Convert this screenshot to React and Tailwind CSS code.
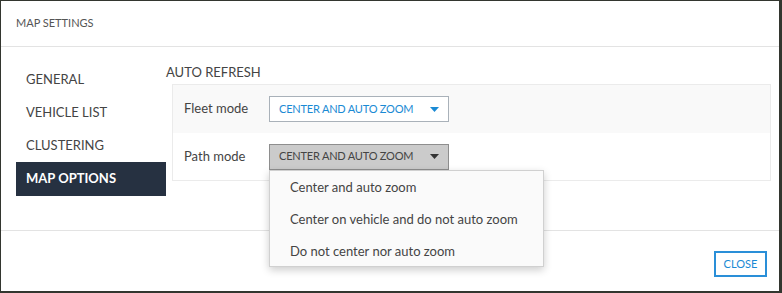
import React from 'react';

const caret = (color) => (
  <svg width="9" height="5" viewBox="0 0 9 5" className="shrink-0">
    <path d="M0 0h9L4.5 5z" fill={color} />
  </svg>
);

export default function App() {
  const sections = ['GENERAL', 'VEHICLE LIST', 'CLUSTERING', 'MAP OPTIONS'];
  const options = ['Center and auto zoom', 'Center on vehicle and do not auto zoom', 'Do not center nor auto zoom'];

  return (
    <div className="w-[782px] h-[293px] bg-[#33362f] pl-px pt-px font-['Lato','Open_Sans',sans-serif]">
      <div className="relative w-[778px] h-[290px] bg-white flex flex-col">
        <div className="h-[45px] box-content flex items-center pl-[15px] text-[11px] text-[#555] border-b border-[#e3e3e3]">
          MAP SETTINGS
        </div>

        <div className="flex h-[184px] border-b border-[#e3e3e3]">
          <div className="w-[150px] ml-[15px] pt-[16px]">
            {sections.map(s => (
              <div
                key={s}
                className={
                  s === 'MAP OPTIONS'
                    ? 'h-[34px] flex items-center pl-[10px] text-[13px] font-bold text-white bg-[#263141]'
                    : 'h-[33px] flex items-center pl-[10px] text-[13px] text-[#444]'
                }
              >
                {s}
              </div>
            ))}
          </div>

          <div className="flex-1 pt-[17px] pr-[8px]">
            <div className="text-[13px] text-[#444] leading-[17px] h-[20px]">AUTO REFRESH</div>
            <div className="ml-[6px] border border-[#ebebeb]">
              <div className="h-[48px] flex items-center bg-[#f9f9f9] pl-[11px]">
                <div className="w-[85px] text-[13px] text-[#444]">Fleet mode</div>
                <div className="w-[180px] h-[26px] border border-[#a9b1b9] bg-white flex items-center justify-between pl-[9px] pr-[9px]">
                  <span className="text-[11px] tracking-[-0.2px] text-[#1a8ad4]">CENTER AND AUTO ZOOM</span>
                  {caret('#1a8ad4')}
                </div>
              </div>
              <div className="h-[47px] flex items-center bg-white pl-[11px]">
                <div className="w-[85px] text-[13px] text-[#444]">Path mode</div>
                <div className="w-[180px] h-[26px] border border-[#8e8e8e] bg-[#cbcbcb] flex items-center justify-between pl-[9px] pr-[9px]">
                  <span className="text-[11px] tracking-[-0.2px] text-[#444]">CENTER AND AUTO ZOOM</span>
                  {caret('#333')}
                </div>
              </div>
            </div>
          </div>
        </div>

        <div className="flex-1 flex justify-end items-start pt-[20px] pr-[12px]">
          <button className="w-[53px] h-[26px] border-2 border-[#2a8fd8] text-[11px] text-[#1a8ad4] flex items-center justify-center">
            CLOSE
          </button>
        </div>

        <div className="absolute left-[268px] top-[169px] w-[275px] h-[97px] bg-[#fafafa] border border-[#d0d0d0] shadow-[0_3px_8px_rgba(0,0,0,0.2)] py-px">
          {options.map(o => (
            <div key={o} className="h-[32px] flex items-center pl-[20px] text-[13px] text-[#444]">
              {o}
            </div>
          ))}
        </div>
      </div>
    </div>
  );
}
